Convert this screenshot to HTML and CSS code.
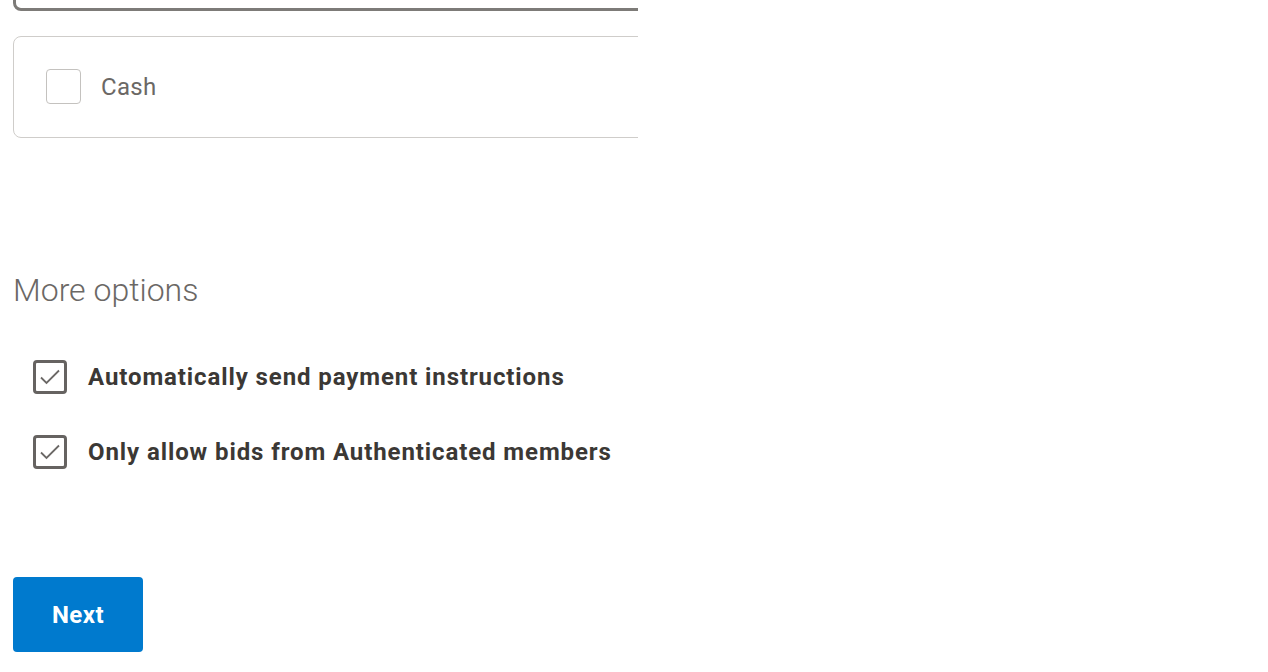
FILE: index.html
```html
<!DOCTYPE html>
<html>
<head>
<meta charset="utf-8">
<link rel="stylesheet" href="styles.css">
</head>
<body>
<div class="page">
  <div class="card card-selected"></div>
  <div class="card card-option">
    <span class="box"></span>
    <span class="option-label">Cash</span>
  </div>

  <h2 class="section-title">More options</h2>

  <div class="check-list">
    <label class="check-row">
      <span class="checkbox">
        <svg width="22" height="18" viewBox="0 0 22 18"><path d="M2 9.5 L7.5 15 L20 2.5" fill="none" stroke="#6b6866" stroke-width="1.8"/></svg>
      </span>
      <span class="check-label">Automatically send payment instructions</span>
    </label>
    <label class="check-row">
      <span class="checkbox">
        <svg width="22" height="18" viewBox="0 0 22 18"><path d="M2 9.5 L7.5 15 L20 2.5" fill="none" stroke="#6b6866" stroke-width="1.8"/></svg>
      </span>
      <span class="check-label">Only allow bids from Authenticated members</span>
    </label>
  </div>

  <button class="btn-next">Next</button>
</div>
</body>
</html>
```

FILE: styles.css
```css
html, body {
  margin: 0;
  padding: 0;
  background: #ffffff;
}
body {
  font-family: Roboto, "Liberation Sans", sans-serif;
  overflow: hidden;
}
.page {
  width: 625px;
  margin-left: 13px;
  overflow: hidden;
  height: 672px;
}
.card {
  width: 760px;
  box-sizing: border-box;
  border-radius: 8px;
  background: #fff;
}
.card-selected {
  height: 100px;
  margin-top: -89px;
  border: 3px solid #7d7b78;
}
.card-option {
  margin-top: 25px;
  height: 102px;
  border: 1px solid #cfcdca;
  display: flex;
  align-items: center;
  padding-left: 32px;
  padding-bottom: 1px;
  gap: 20px;
}
.box {
  width: 35px;
  height: 35px;
  box-sizing: border-box;
  border: 1px solid #c4c2bf;
  border-radius: 4px;
}
.option-label {
  font-size: 24px;
  color: #6b6865;
  letter-spacing: 0.3px;
}
.section-title {
  margin: 132px 0 0 0;
  font-size: 32px;
  font-weight: 300;
  color: #6b6865;
  line-height: 40px;
}
.check-list {
  margin-top: 50px;
  display: flex;
  flex-direction: column;
  gap: 41px;
  padding-left: 20px;
}
.check-row {
  display: flex;
  align-items: center;
  gap: 21px;
  height: 34px;
}
.checkbox {
  width: 34px;
  height: 34px;
  box-sizing: border-box;
  border: 3px solid #666361;
  border-radius: 4px;
  display: flex;
  align-items: center;
  justify-content: center;
}
.check-label {
  font-size: 24px;
  font-weight: 700;
  color: #3b3835;
  letter-spacing: 0.9px;
}
.btn-next {
  margin-top: 108px;
  margin-left: 0;
  width: 130px;
  height: 75px;
  border: none;
  border-radius: 4px;
  background: #007ace;
  color: #fff;
  font-family: Roboto, "Liberation Sans", sans-serif;
  font-size: 24px;
  font-weight: 700;
  letter-spacing: 0.5px;
  cursor: pointer;
  padding: 0;
}
```
